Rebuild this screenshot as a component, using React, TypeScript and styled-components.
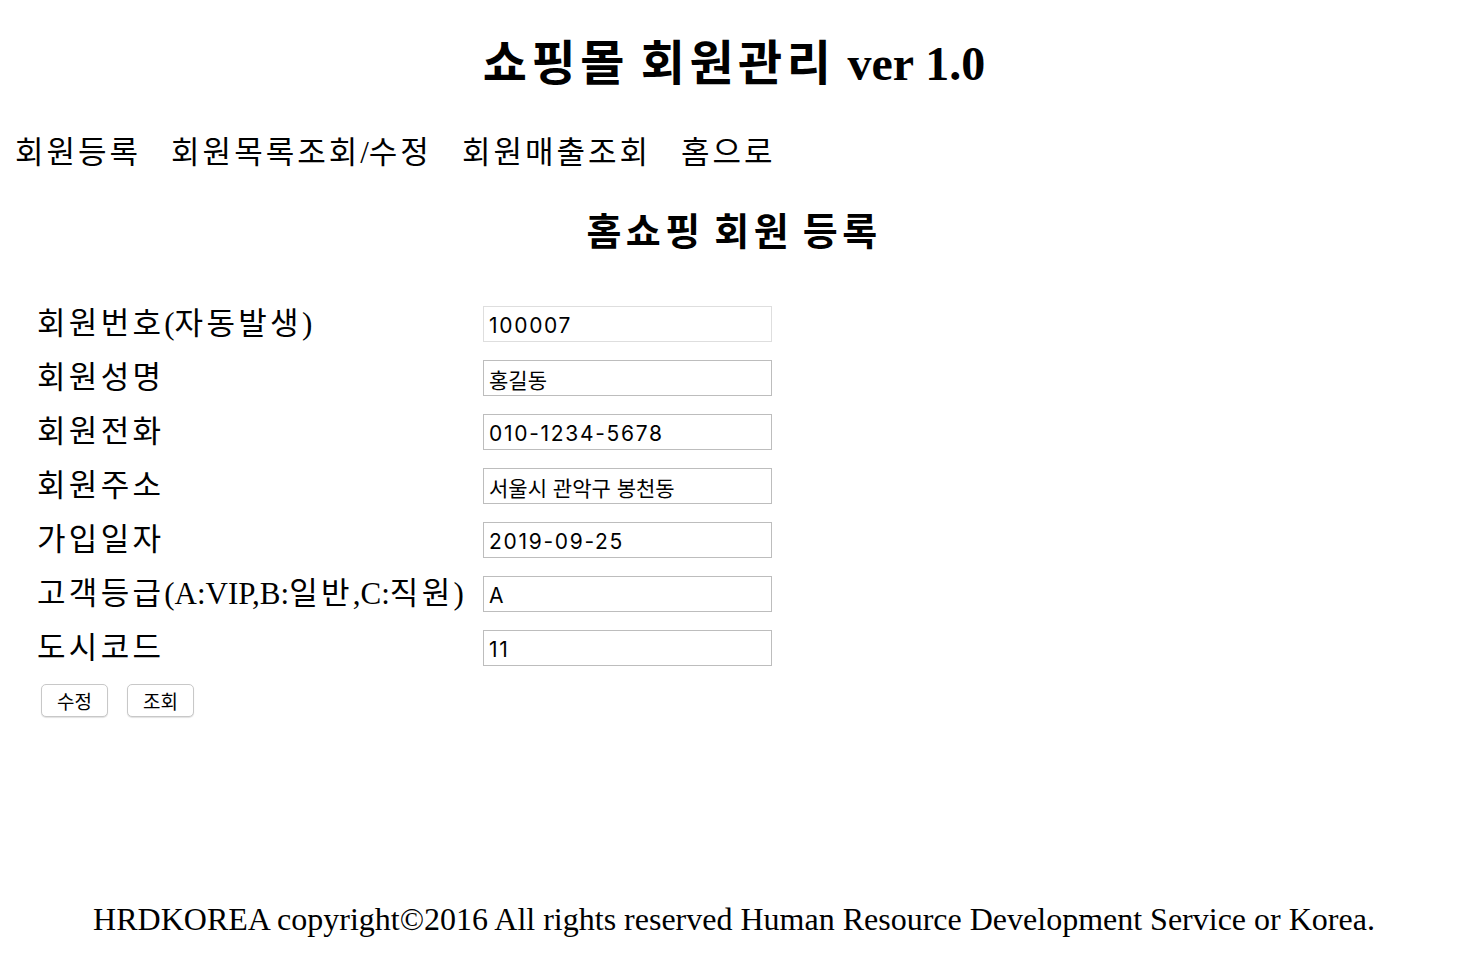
import React from "react";
import styled, { createGlobalStyle } from "styled-components";

const Global = createGlobalStyle`
  html, body { margin: 0; padding: 0; background: #fff; }
  body { font-family: "Liberation Serif", "Noto Sans CJK KR", serif; color: #000; }
`;

const Page = styled.div`
  width: 1468px;
  height: 954px;
  display: flex;
  flex-direction: column;
`;

const Hangul = styled.span<{ $spacing: number }>`
  letter-spacing: ${(p) => p.$spacing}px;
`;

const HANGUL_RUN = /([\uAC00-\uD7A3]+)/;

function Spaced({ text, spacing }: { text: string; spacing: number }) {
  const parts = text.split(HANGUL_RUN);
  return (
    <>
      {parts.map((part, i) =>
        HANGUL_RUN.test(part) ? (
          <Hangul key={i} $spacing={spacing}>
            {part}
          </Hangul>
        ) : (
          <React.Fragment key={i}>{part}</React.Fragment>
        )
      )}
    </>
  );
}

const Title = styled.h1`
  margin: 34px 0 0;
  font-size: 48px;
  line-height: 60px;
  font-weight: 700;
  text-align: center;
`;

const Nav = styled.nav`
  display: flex;
  gap: 30px;
  margin: 39px 0 0 15px;
  font-size: 31px;
  line-height: 40px;
`;

const NavItem = styled.a`
  color: #000;
  text-decoration: none;
`;

const SubTitle = styled.h2`
  margin: 34px 0 0;
  font-size: 38px;
  line-height: 50px;
  font-weight: 700;
  text-align: center;
`;

const Form = styled.form`
  display: grid;
  grid-template-columns: 446px 289px;
  row-gap: 18px;
  margin: 49px 0 0 37px;
`;

const Label = styled.label`
  font-size: 31px;
  line-height: 36px;
  height: 36px;
  display: flex;
  align-items: center;
  white-space: nowrap;
`;

const Input = styled.input<{ $readonly?: boolean; $spacing: number }>`
  box-sizing: border-box;
  width: 289px;
  height: 36px;
  margin: 0;
  padding: 2px 5px 0;
  border: 1px solid ${(p) => (p.$readonly ? "#dedede" : "#bdbdbd")};
  border-radius: 0;
  font-family: "Inter", "Noto Sans CJK KR", sans-serif;
  font-size: 21px;
  letter-spacing: ${(p) => p.$spacing}px;
  color: #000;
  background: #fff;
  outline: none;
`;

const Buttons = styled.div`
  display: flex;
  gap: 19px;
  margin: 18px 0 0 41px;
`;

const Button = styled.button`
  box-sizing: border-box;
  width: 67px;
  height: 33px;
  border: 1px solid #c8c8c8;
  border-radius: 5px;
  background: #fff;
  box-shadow: 0 1px 1px rgba(0, 0, 0, 0.12);
  font-family: "Noto Sans CJK KR", sans-serif;
  font-size: 19px;
  line-height: 1;
  color: #000;
  padding: 0;
`;

const Footer = styled.footer`
  margin-top: auto;
  margin-bottom: 15px;
  font-size: 32px;
  line-height: 40px;
  text-align: center;
`;

const fields: { label: string; value: string; readonly?: boolean }[] = [
  { label: "회원번호(자동발생)", value: "100007", readonly: true },
  { label: "회원성명", value: "홍길동" },
  { label: "회원전화", value: "010-1234-5678" },
  { label: "회원주소", value: "서울시 관악구 봉천동" },
  { label: "가입일자", value: "2019-09-25" },
  { label: "고객등급(A:VIP,B:일반,C:직원)", value: "A" },
  { label: "도시코드", value: "11" },
];

const navItems = ["회원등록", "회원목록조회/수정", "회원매출조회", "홈으로"];

export default function App() {
  return (
    <Page>
      <Global />
      <Title>
        <Spaced text="쇼핑몰 회원관리" spacing={4.5} /> ver 1.0
      </Title>
      <Nav>
        {navItems.map((n) => (
          <NavItem href="#" key={n}>
            <Spaced text={n} spacing={3} />
          </NavItem>
        ))}
      </Nav>
      <SubTitle>
        <Spaced text="홈쇼핑 회원 등록" spacing={4.5} />
      </SubTitle>
      <Form onSubmit={(e) => e.preventDefault()}>
        {fields.map((f) => (
          <React.Fragment key={f.label}>
            <Label>
              <Spaced text={f.label} spacing={3.3} />
            </Label>
            <Input
              defaultValue={f.value}
              readOnly={f.readonly}
              $readonly={f.readonly}
              $spacing={HANGUL_RUN.test(f.value) ? 0 : 1.7}
            />
          </React.Fragment>
        ))}
      </Form>
      <Buttons>
        <Button type="button">수정</Button>
        <Button type="button">조회</Button>
      </Buttons>
      <Footer>HRDKOREA copyright©2016 All rights reserved Human Resource Development Service or Korea.</Footer>
    </Page>
  );
}
